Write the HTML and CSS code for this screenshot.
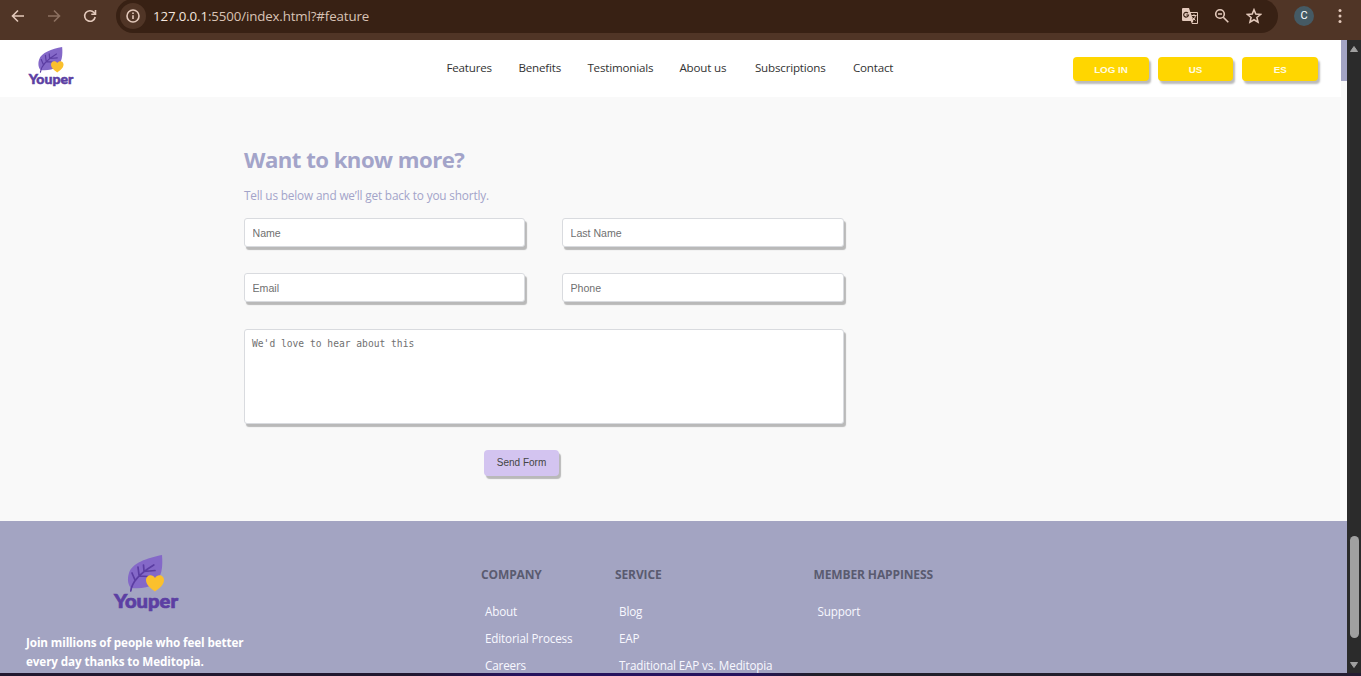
FILE: index.html
```html
<!DOCTYPE html>
<html lang="en">
<head>
<meta charset="utf-8">
<title>Youper</title>
<link rel="stylesheet" href="styles.css">
</head>
<body>
<svg class="defs" width="0" height="0" aria-hidden="true">
  <symbol id="logo" viewBox="0 0 66 58" overflow="visible">
    <path d="M49 1C34 4 19 9 16 19c-2 6-1 12 2 15 8 1 17 0 23-4 8-6 9-18 8-29z" fill="#8468c8"/>
    <path d="M17.8 37c1-9 8-17 23-26M22 26l-3-7M26 21l-1-8M26 22l9 .5M31 17l-.5-6M31 17.500l11-1" fill="none" stroke="#5b3da2" stroke-width="1.7" stroke-linecap="round"/>
    <path d="M42 37.500c-3-2.500-9-6-9-11.500 0-5 6.500-6.500 9-2 2.500-4.500 9-3 9 2 0 5.500-6 9-9 11.500z" fill="#fbc02d"/>
    <text x="1" y="54" textLength="64" lengthAdjust="spacingAndGlyphs" class="wordmark">Youper</text>
  </symbol>
</svg>

<div class="toolbar">
  <svg class="tool back" width="16" height="16" viewBox="0 0 16 16"><path d="M14 8H2.500M8 2.500 2.500 8 8 13.500"/></svg>
  <svg class="tool forward" width="16" height="16" viewBox="0 0 16 16"><path d="M2 8h11.500M8 2.500 13.500 8 8 13.500"/></svg>
  <svg class="tool reload" width="16" height="16" viewBox="0 0 16 16"><path d="M13.200 9A5.300 5.300 0 1 1 12 4.500l1.500 1.500M13.500 2v4.200H9.300"/></svg>
  <div class="address">
    <span class="info"><svg class="tool" width="16" height="16" viewBox="0 0 16 16"><circle cx="8" cy="8" r="6"/><path d="M8 7.300v3.700M8 4.600v1.500"/></svg></span>
    <span class="url"><b>127.0.0.1</b>:5500/index.html?#feature</span>
    <svg class="translate" width="18" height="18" viewBox="0 0 18 18"><path d="M2 1h6l1.300 4H16q1 0 1 1v10q0 1-1 1h-5l-1.300-3H2q-1 0-1-1V2q0-1 1-1z" fill="#e3c9bb"/><path d="M9.800 6h6.200v10h-4.800l1.200-2z" fill="#382114"/><path d="M7 6.200A2.400 2.400 0 1 0 7.500 8H5.300" fill="none" stroke="#382114" stroke-width="1.200"/><path d="M10.500 8.500h5M13 7.200v1.300M11.500 10.500l3 3M14.500 8.700q-.5 3-3 4.800" fill="none" stroke="#e3c9bb"/></svg>
    <svg class="tool" width="16" height="16" viewBox="0 0 16 16"><circle cx="6" cy="6" r="4.300"/><path d="m9.300 9.300 5 5M4 6h4"/></svg>
    <svg class="tool" width="16" height="16" viewBox="0 0 16 16"><path d="m8 1.800 1.800 4.300 4.700.4-3.600 3 1.100 4.600L8 11.700l-4 2.400 1.100-4.600-3.600-3 4.700-.4z"/></svg>
  </div>
  <span class="avatar">C</span>
  <svg class="dots" width="4" height="16" viewBox="0 0 4 16"><circle cx="2" cy="2.500" r="1.500"/><circle cx="2" cy="8" r="1.500"/><circle cx="2" cy="13.500" r="1.500"/></svg>
</div>

<div class="viewport">
  <div class="page">
    <div class="top">
      <header class="nav">
        <svg class="brand"><use href="#logo"/></svg>
        <nav class="links"><a>Features</a><a>Benefits</a><a>Testimonials</a><a>About us</a><a>Subscriptions</a><a>Contact</a></nav>
        <div class="actions"><button>LOG IN</button><button>US</button><button>ES</button></div>
      </header>
      <div class="accent"></div>
    </div>
    <main class="contact">
      <h1>Want to know more?</h1>
      <p>Tell us below and we’ll get back to you shortly.</p>
      <form>
        <input placeholder="Name"><input placeholder="Last Name">
        <input placeholder="Email"><input placeholder="Phone">
        <textarea placeholder="We'd love to hear about this"></textarea>
        <button type="button">Send Form</button>
      </form>
    </main>
    <footer class="footer">
      <div class="about">
        <svg class="footer-brand"><use href="#logo"/></svg>
        <p>Join millions of people who feel better<br>every day thanks to Meditopia.</p>
      </div>
      <div class="col"><h2>COMPANY</h2><a>About</a><a>Editorial Process</a><a>Careers</a></div>
      <div class="col"><h2>SERVICE</h2><a>Blog</a><a>EAP</a><a>Traditional EAP vs. Meditopia</a></div>
      <div class="col"><h2>MEMBER HAPPINESS</h2><a>Support</a></div>
    </footer>
  </div>
  <div class="scrollbar">
    <svg width="10" height="8" viewBox="0 0 10 8"><path d="M5 1.500 8.500 6.500h-7z"/></svg>
    <div class="thumb"></div>
    <svg width="10" height="8" viewBox="0 0 10 8"><path d="M5 6.500 8.500 1.500h-7z"/></svg>
  </div>
</div>
<div class="taskbar"></div>
</body>
</html>
```

FILE: styles.css
```css
* { box-sizing: border-box; }
body {
  margin: 0;
  width: 1361px;
  height: 676px;
  overflow: hidden;
  display: flex;
  flex-direction: column;
  font-family: "Open Sans", "Noto Sans", sans-serif;
  font-size: 12px;
  background: #f9f9f9;
}
.defs { position: absolute; }
.wordmark { font: 900 18.5px Lato, sans-serif; fill: #5c3fa3; stroke: #5c3fa3; stroke-width: .7px; }

.toolbar {
  height: 40px;
  flex: none;
  display: flex;
  align-items: center;
  padding: 0 19px 8px 10px;
  background: #503526;
}
.tool { fill: none; stroke: #e3c9bb; stroke-width: 1.6; flex: none; }
.forward { stroke: #8c7060; margin-left: 20px; }
.reload { margin-left: 20px; }
.address {
  display: flex;
  align-items: center;
  width: 1162px;
  height: 34px;
  margin-left: 18px;
  padding: 0 16px 0 4px;
  border-radius: 17px;
  background: #382114;
}
.info {
  display: flex;
  align-items: center;
  justify-content: center;
  width: 26px;
  height: 26px;
  border-radius: 50%;
  background: #503526;
}
.url { flex: 1; margin-left: 7px; font-size: 13.3px; line-height: 18px; letter-spacing: -.13px; color: #d9c3b6; }
.url b { font-weight: 400; color: #f4e6de; }
.translate { margin-right: 15px; }
.address .translate + .tool { margin-right: 16px; }
.avatar {
  width: 20px;
  height: 20px;
  margin-left: 16px;
  border-radius: 50%;
  background: #455a64;
  color: #fff;
  font: 11px/20px Roboto, sans-serif;
  text-align: center;
}
.dots { margin-left: 24px; fill: #e3c9bb; }

.viewport { display: flex; height: 633px; flex: none; }
.page { width: 1347px; overflow: hidden; display: flex; flex-direction: column; }
.top { display: flex; flex: none; }
.nav { display: flex; width: 1341px; height: 57px; background: #fff; }
.accent { width: 6px; height: 41px; background: #a3a4c4; }
.brand { width: 46px; height: 41px; margin: 6px 0 0 28px; overflow: visible; }
.links {
  display: grid;
  grid-template-columns: 72px 69px 92px 75.5px 98px 50px;
  margin-left: 372.4px;
  line-height: 56px;
  white-space: nowrap;
  font-size: 11.6px;
  letter-spacing: -.18px;
  color: #333;
}
.actions { display: flex; gap: 9px; margin: 17px 0 0 auto; padding-right: 23px; }
.actions button {
  width: 75.6px;
  height: 24px;
  padding: 0;
  border: 0;
  border-radius: 4px;
  background: #ffd600;
  box-shadow: 2px 3px 2px #bbb;
  color: #fffbe0;
  font: bold 9.8px "Liberation Sans", sans-serif;
}

.contact { height: 424px; flex: none; padding: 48px 0 0 244px; color: #a3a4c9; }
.contact h1 { margin: 0; font-size: 22.2px; line-height: 30px; letter-spacing: -.54px; }
.contact p { margin: 10px 0 13px; line-height: 20px; font-size: 11.8px; letter-spacing: -.16px; }
form { display: grid; grid-template-columns: 281px 282px; column-gap: 37px; row-gap: 26px; width: 600px; }
input, textarea {
  margin: 0;
  width: 100%;
  height: 29px;
  padding: 0 7.5px;
  border: 1px solid #d9dbdf;
  border-radius: 3px;
  background: #fff;
  box-shadow: 2px 3px 1px #b9b9b9;
  font: 10.6px "Liberation Sans", sans-serif;
  resize: none;
}
textarea { grid-column: 1 / 3; height: 95px; margin-top: 1px; padding: 7px; font: 9.65px/13px "DejaVu Sans Mono", monospace; }
::placeholder { color: #707070; }
form button {
  grid-column: 1 / 3;
  width: 75px;
  height: 26px;
  margin-left: 240px;
  padding: 0 0 1px;
  border: 0;
  border-radius: 4px;
  background: #d3c4f0;
  box-shadow: 2px 3px 1px #b9b9b9;
  color: #444;
  font: 10px "Liberation Sans", sans-serif;
}

.footer {
  display: grid;
  grid-template-columns: 455px 134px 198.500px 200px;
  height: 160px;
  flex: none;
  padding-left: 26px;
  background: #a3a4c2;
  color: #f8f8ff;
}
.footer-brand { display: block; width: 66px; height: 58px; margin: 33px 0 0 87px; overflow: visible; }
.about p { margin: 21px 0 0; font-size: 11.7px; line-height: 19px; font-weight: 700; letter-spacing: -.11px; color: #fff; }
.col { display: flex; flex-direction: column; padding-top: 44px; white-space: nowrap; font-size: 11.7px; letter-spacing: -.16px; }
.col h2 { margin: 0 0 16px; font-size: 12px; line-height: 20px; letter-spacing: -.12px; color: #5a5b70; }
.col a { margin-left: 4px; line-height: 20px; margin-bottom: 7px; }

.scrollbar { width: 14px; background: #2b2b2b; display: flex; flex-direction: column; align-items: center; padding: 5px 0 4px; }
.scrollbar svg { fill: #a0a0a0; stroke: #a0a0a0; stroke-linejoin: round; flex: none; }
.thumb { width: 9px; height: 102px; margin: 483px 0 auto; border-radius: 5px; background: #a0a0a0; flex: none; }
.taskbar { height: 3px; flex: none; background: linear-gradient(90deg, #21182f 0, #21182f 30%, #26135d 38%, #26135d 55%, #202028 60%, #241d32); }
```
